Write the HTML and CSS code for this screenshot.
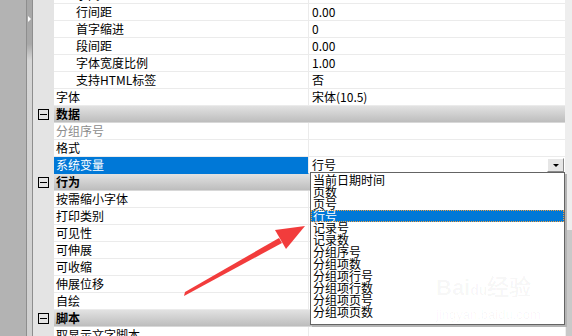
FILE: index.html
```html
<!DOCTYPE html>
<html lang="zh-CN">
<head>
    <meta charset="UTF-8">
    <title>属性</title>
    <link rel="stylesheet" href="styles.css">
</head>
<body>
    <div class="side"></div>
    <div class="splitter"><span class="grip"></span></div>

    <div class="grid">
        <div class="rows">
            <div class="row"><div class="gut"></div><div class="name sub">字间距</div><div class="val">0.00</div></div>
            <div class="row"><div class="gut"></div><div class="name sub">行间距</div><div class="val">0.00</div></div>
            <div class="row"><div class="gut"></div><div class="name sub">首字缩进</div><div class="val">0</div></div>
            <div class="row"><div class="gut"></div><div class="name sub">段间距</div><div class="val">0.00</div></div>
            <div class="row"><div class="gut"></div><div class="name sub">字体宽度比例</div><div class="val">1.00</div></div>
            <div class="row"><div class="gut"></div><div class="name sub">支持HTML标签</div><div class="val">否</div></div>
            <div class="row"><div class="gut"></div><div class="name">字体</div><div class="val">宋体(10.5)</div></div>

            <div class="row group"><div class="gut"><span class="toggle"></span></div><div class="title">数据</div></div>
            <div class="row"><div class="gut"></div><div class="name muted">分组序号</div><div class="val"></div></div>
            <div class="row"><div class="gut"></div><div class="name">格式</div><div class="val"></div></div>
            <div class="row"><div class="gut"></div><div class="name selected">系统变量</div>
                <div class="val combo">行号<span class="drop-btn"></span></div>
            </div>

            <div class="row group"><div class="gut"><span class="toggle"></span></div><div class="title">行为</div></div>
            <div class="row"><div class="gut"></div><div class="name">按需缩小字体</div><div class="val"></div></div>
            <div class="row"><div class="gut"></div><div class="name">打印类别</div><div class="val"></div></div>
            <div class="row"><div class="gut"></div><div class="name">可见性</div><div class="val"></div></div>
            <div class="row"><div class="gut"></div><div class="name">可伸展</div><div class="val"></div></div>
            <div class="row"><div class="gut"></div><div class="name">可收缩</div><div class="val"></div></div>
            <div class="row"><div class="gut"></div><div class="name">伸展位移</div><div class="val"></div></div>
            <div class="row"><div class="gut"></div><div class="name">自绘</div><div class="val"></div></div>

            <div class="row group"><div class="gut"><span class="toggle"></span></div><div class="title">脚本</div></div>
            <div class="row"><div class="gut"></div><div class="name">取显示文字脚本</div><div class="val"></div></div>
        </div>
    </div>

    <div class="vscroll"><div class="thumb"></div></div>

    <!-- open drop-down list of the 系统变量 combo -->
    <ul class="droplist">
        <li>当前日期时间</li>
        <li>页数</li>
        <li>页号</li>
        <li class="active">行号</li>
        <li>记录号</li>
        <li>记录数</li>
        <li>分组序号</li>
        <li>分组项数</li>
        <li>分组项行号</li>
        <li>分组项行数</li>
        <li>分组项页号</li>
        <li>分组项页数</li>
    </ul>

    <div class="watermark">
        <div class="wm-logo">Bai<span class="wm-du">du</span>经验</div>
        <div class="wm-url">jingyan.baidu.com</div>
    </div>

    <svg class="arrow" width="572" height="336" viewBox="0 0 572 336">
        <polygon points="184,296 185,292 279,238 282,243" fill="#f23c3c"/>
        <polygon points="305,226 275,230 286,249" fill="#f23c3c"/>
    </svg>
</body>
</html>
```

FILE: styles.css
```css
* { box-sizing: border-box; }
html, body { margin: 0; padding: 0; }
body {
    width: 572px; height: 336px; overflow: hidden;
    display: flex; position: relative;
    font-family: "Noto Sans CJK SC", "Liberation Sans", sans-serif;
    font-size: 12px; color: #000; background: #fff;
}

.side { width: 27px; background: #b3b3b3; border-right: 1px solid #8e8e8e; }
.splitter {
    width: 6px; position: relative;
    background: linear-gradient(to bottom, #a8a8a8 0, #a8a8a8 44px, #d6d6d6 60px, #d0d0d0 100%);
    border-right: 1px solid #8e8e8e;
}
.grip {
    position: absolute; left: 1px; top: 16px;
    border-left: 3px solid #fff; border-top: 3px solid transparent; border-bottom: 3px solid transparent;
}

.grid { width: 532px; overflow: hidden; background: #e4e4e4; }
.rows { margin-top: -13px; }
.row { display: grid; grid-template-columns: 21px 255px 256px; height: 17px; line-height: 16px; }
.gut { background: #e4e4e4; position: relative; }
.name, .val { background: #fff; border-bottom: 1px solid #ebebeb; white-space: nowrap; overflow: hidden; }
.name { padding-left: 2px; border-right: 1px solid #ebebeb; }
.name.sub { padding-left: 22px; }
.name.muted { color: #8c8c8c; }
.name.selected { background: #0078d7; color: #fff; border-bottom-color: #0078d7; }
.val { padding-left: 3px; }

.group .title {
    grid-column: 2 / 4; padding-left: 2px; font-weight: bold;
    background: linear-gradient(to bottom, #e2e2e2, #bdbdbd);
    border-bottom: 1px solid #d8d8d8;
}
.toggle {
    position: absolute; left: 5px; top: 3px; width: 11px; height: 11px;
    border: 1px solid #000; background: #e4e4e4;
}
.toggle::after {
    content: ""; position: absolute; left: 1px; right: 1px; top: 4px; height: 1px; background: #000;
}

.combo { position: relative; }
.drop-btn {
    position: absolute; right: 1px; top: 1px; width: 17px; height: 14px;
    background: #e6e6e6; border: 1px solid; border-color: #fff #8a8a8a #8a8a8a #fff;
}
.drop-btn::after {
    content: ""; position: absolute; left: 5px; top: 5px;
    border-top: 3px solid #000; border-left: 3px solid transparent; border-right: 3px solid transparent;
}

.vscroll { width: 7px; background: #eeeeee; position: relative; }
.thumb { position: absolute; left: 1px; right: 0; top: 230px; bottom: 0; background: #c9c9c9; }

.droplist {
    position: absolute; left: 310px; top: 172px; width: 255px; height: 153px;
    margin: 0; padding: 1px 0 0; list-style: none;
    background: #fff; border: 1px solid #646464;
    box-shadow: 2px 2px 0 #b4b4b4;
}
.droplist li { height: 12px; line-height: 12px; padding-left: 2px; white-space: nowrap; }
.droplist li.active { background: #0078d7; color: #fff; outline: 1px dotted #f0a040; outline-offset: -1px; }

.watermark { position: absolute; left: 436px; top: 276px; color: rgba(0,0,0,0.035); }
.wm-logo { font-family: "Liberation Sans", sans-serif; font-size: 22px; font-weight: bold; line-height: 24px; }
.wm-du { font-size: 14px; }
.wm-url { font-family: "Liberation Sans", sans-serif; font-size: 13px; margin-top: 5px; }

.arrow { position: absolute; left: 0; top: 0; pointer-events: none; }
```
